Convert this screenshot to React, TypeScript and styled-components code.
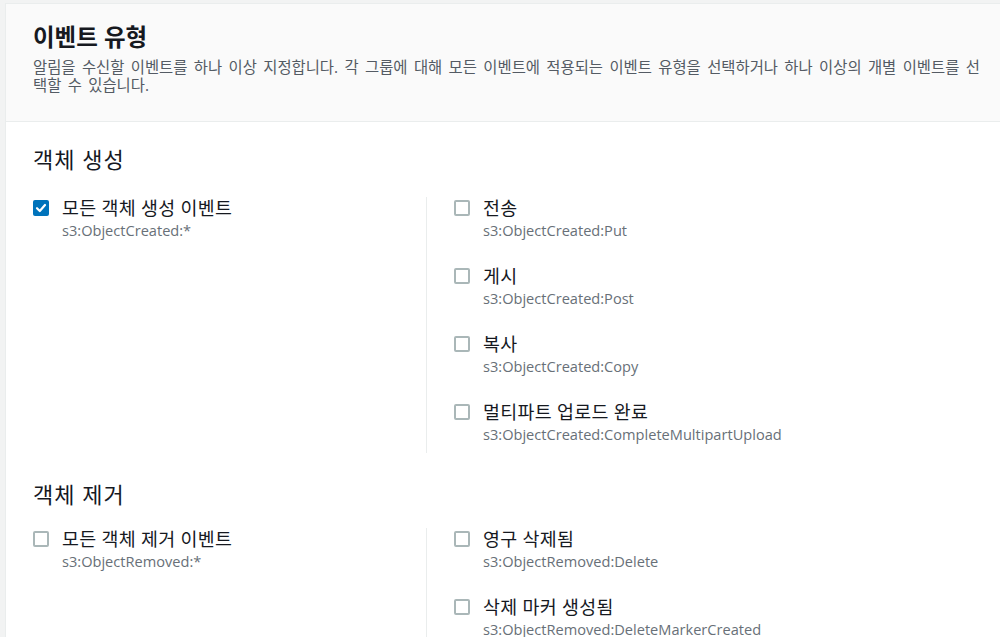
import React, { useState } from "react";
import styled, { createGlobalStyle } from "styled-components";

const GlobalStyle = createGlobalStyle`
  body {
    margin: 0;
    background: #f2f3f3;
    font-family: "Open Sans", "Noto Sans CJK KR", sans-serif;
    color: #16191f;
  }
`;

const Page = styled.div`
  padding: 3px 0 0 5px;
  width: 1000px;
  height: 637px;
  box-sizing: border-box;
  overflow: hidden;
`;

const Card = styled.div`
  width: 1020px;
  min-height: 640px;
  background: #ffffff;
  border: 1px solid #eaeded;
  box-sizing: border-box;
`;

const Header = styled.div`
  background: #fafafa;
  border-bottom: 1px solid #eaeded;
  padding: 18px 27px 0;
  height: 118px;
  box-sizing: border-box;
`;

const Title = styled.h2`
  margin: 0;
  font-size: 23.5px;
  line-height: 30px;
  font-weight: 700;
  color: #16191f;
`;

const Description = styled.p`
  margin: 7px 0 0;
  width: 956px;
  font-size: 15.4px;
  line-height: 18px;
  word-spacing: 2.4px;
  word-break: break-all;
  color: #545b64;
`;

const Body = styled.div`
  padding: 22px 27px 0;
`;

const SectionTitle = styled.h3`
  margin: 0 0 19px;
  font-size: 22px;
  line-height: 30px;
  letter-spacing: 1px;
  font-weight: 400;
  color: #16191f;
`;

const Section = styled.section`
  margin-bottom: 26px;

  &:first-child ${SectionTitle} {
    margin-bottom: 23px;
  }
`;

const Columns = styled.div`
  display: grid;
  grid-template-columns: 393px 1fr;
`;

const Column = styled.div<{ $divided?: boolean }>`
  display: flex;
  flex-direction: column;
  gap: 24px;
  padding-left: ${({ $divided }) => ($divided ? "27px" : "0")};
  border-left: ${({ $divided }) => ($divided ? "1px solid #eaeded" : "none")};
  padding-bottom: 8px;
`;

const Item = styled.label`
  display: flex;
  align-items: flex-start;
  gap: 13px;
  cursor: pointer;
`;

const Box = styled.span<{ $checked: boolean }>`
  flex: none;
  width: 16px;
  height: 16px;
  margin-top: 3px;
  box-sizing: border-box;
  border-radius: 2px;
  border: ${({ $checked }) => ($checked ? "none" : "2px solid #aab7b8")};
  background: ${({ $checked }) => ($checked ? "#0073bb" : "#ffffff")};
  display: flex;
  align-items: center;
  justify-content: center;
`;

const Texts = styled.span`
  display: flex;
  flex-direction: column;
`;

const Label = styled.span`
  font-size: 18.4px;
  line-height: 22px;
  letter-spacing: 0.3px;
  color: #16191f;
`;

const Code = styled.span`
  font-size: 14.6px;
  line-height: 22px;
  color: #687078;
`;

interface EventOption {
  id: string;
  label: string;
  code: string;
}

interface Group {
  title: string;
  all: EventOption;
  items: EventOption[];
}

const groups: Group[] = [
  {
    title: "객체 생성",
    all: { id: "created-all", label: "모든 객체 생성 이벤트", code: "s3:ObjectCreated:*" },
    items: [
      { id: "put", label: "전송", code: "s3:ObjectCreated:Put" },
      { id: "post", label: "게시", code: "s3:ObjectCreated:Post" },
      { id: "copy", label: "복사", code: "s3:ObjectCreated:Copy" },
      {
        id: "multipart",
        label: "멀티파트 업로드 완료",
        code: "s3:ObjectCreated:CompleteMultipartUpload",
      },
    ],
  },
  {
    title: "객체 제거",
    all: { id: "removed-all", label: "모든 객체 제거 이벤트", code: "s3:ObjectRemoved:*" },
    items: [
      { id: "delete", label: "영구 삭제됨", code: "s3:ObjectRemoved:Delete" },
      {
        id: "marker",
        label: "삭제 마커 생성됨",
        code: "s3:ObjectRemoved:DeleteMarkerCreated",
      },
    ],
  },
];

const Checkbox = ({
  option,
  checked,
  onToggle,
}: {
  option: EventOption;
  checked: boolean;
  onToggle: () => void;
}) => (
  <Item onClick={onToggle}>
    <Box $checked={checked}>
      {checked && (
        <svg width="12" height="12" viewBox="0 0 12 12">
          <path
            d="M2 6.2 L4.8 9 L10 3"
            fill="none"
            stroke="#ffffff"
            strokeWidth="2.2"
            strokeLinecap="round"
            strokeLinejoin="round"
          />
        </svg>
      )}
    </Box>
    <Texts>
      <Label>{option.label}</Label>
      <Code>{option.code}</Code>
    </Texts>
  </Item>
);

const App = () => {
  const [checked, setChecked] = useState<Record<string, boolean>>({
    "created-all": true,
  });

  const toggle = (id: string) =>
    setChecked((prev) => ({ ...prev, [id]: !prev[id] }));

  return (
    <Page>
      <GlobalStyle />
      <Card>
        <Header>
          <Title>이벤트 유형</Title>
          <Description>
            알림을 수신할 이벤트를 하나 이상 지정합니다. 각 그룹에 대해 모든
            이벤트에 적용되는 이벤트 유형을 선택하거나 하나 이상의 개별 이벤트를
            선택할 수 있습니다.
          </Description>
        </Header>
        <Body>
          {groups.map((group) => (
            <Section key={group.title}>
              <SectionTitle>{group.title}</SectionTitle>
              <Columns>
                <Column>
                  <Checkbox
                    option={group.all}
                    checked={!!checked[group.all.id]}
                    onToggle={() => toggle(group.all.id)}
                  />
                </Column>
                <Column $divided>
                  {group.items.map((item) => (
                    <Checkbox
                      key={item.id}
                      option={item}
                      checked={!!checked[item.id]}
                      onToggle={() => toggle(item.id)}
                    />
                  ))}
                </Column>
              </Columns>
            </Section>
          ))}
        </Body>
      </Card>
    </Page>
  );
};

export default App;
